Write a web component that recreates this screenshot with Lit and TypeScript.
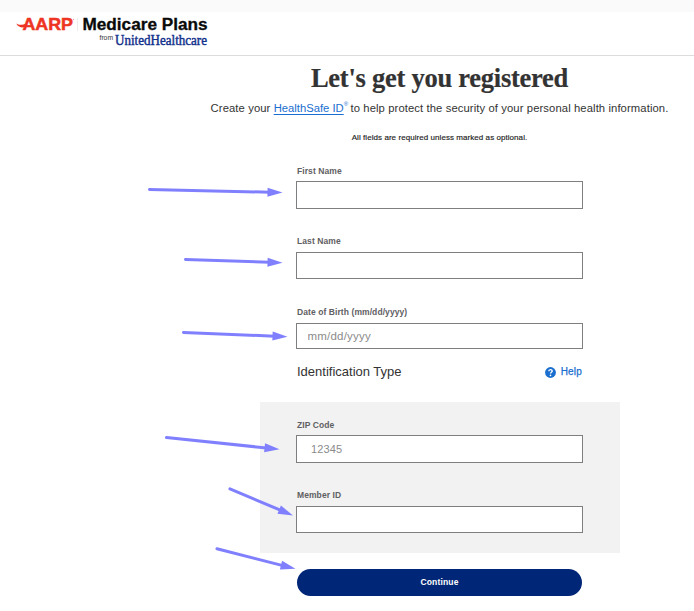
import { LitElement, html, css, svg } from "lit";
import { customElement } from "lit/decorators.js";

@customElement("brand-logo")
class BrandLogo extends LitElement {
  static styles = css`
    :host { display: block; height: 43px; }
    svg { display: block; }
    .aarp { font: bold 16.5px "Liberation Sans", Arial, sans-serif; fill: #ee3524; stroke: #ee3524; stroke-width: 0.5; }
    .plans { font: bold 16px "Liberation Sans", Arial, sans-serif; fill: #0a0a0a; stroke: #0a0a0a; stroke-width: 0.3; }
    .from { font: 7.5px "Liberation Sans", Arial, sans-serif; fill: #333; }
    .uhc { font: 14px "Liberation Serif", "Times New Roman", serif; fill: #12318c; stroke: #12318c; stroke-width: 0.45; }
  `;
  render() {
    return html`<svg width="230" height="43" viewBox="0 12 230 43">
      <path d="M16.3 23.6C19 25.4 22 25.1 27 23.4L25.5 26.5C21.5 28.4 18 27.2 16.3 23.6Z" fill="#ee3524" />
      <text class="aarp" x="22.5" y="30" textLength="50.5" lengthAdjust="spacingAndGlyphs">AARP</text>
      <circle cx="73.5" cy="19.5" r="0.7" fill="#f6a59b" />
      <path d="M77.5 18V31" stroke="#ececec" />
      <text class="plans" x="82.5" y="30" textLength="125" lengthAdjust="spacingAndGlyphs">Medicare Plans</text>
      <text class="from" x="99.5" y="40" textLength="13.5" lengthAdjust="spacingAndGlyphs">from</text>
      <text class="uhc" x="115" y="45" textLength="92" lengthAdjust="spacingAndGlyphs">UnitedHealthcare</text>
    </svg>`;
  }
}

@customElement("form-field")
class FormField extends LitElement {
  static properties = { label: {}, placeholder: {} };
  declare label: string;
  declare placeholder: string;
  static styles = css`
    :host { display: block; font-family: "Liberation Sans", Arial, sans-serif; }
    label { display: block; box-sizing: border-box; height: var(--label-height, 16px); padding-left: 1px; font: bold 8.5px/12px "Liberation Sans", Arial, sans-serif; color: #5f6063; letter-spacing: 0.08px; }
    input { display: block; box-sizing: border-box; width: 287px; height: var(--field-height, 27px); margin: 0; border: 1px solid #7d7f81; border-radius: 0; background: #fff; padding: 0 0 0 var(--field-indent, 11px); font: var(--hint-size, 11px) "Liberation Sans", Arial, sans-serif; letter-spacing: var(--hint-spacing, 0); outline: none; color: #333; }
    input::placeholder { color: #8b8b8b; opacity: 1; }
  `;
  render() {
    return html`<label for="field">${this.label}</label><input id="field" placeholder=${this.placeholder ?? ""} />`;
  }
}

const arrows = [
  [148.5, 189.5, 282.5, 192.5],
  [184.5, 259.5, 282.5, 262.7],
  [182.5, 332.5, 287.5, 336.7],
  [165.5, 437.5, 279.5, 449.3],
  [229, 488.5, 293, 515.5],
  [216, 548.5, 295.5, 568.8],
];

@customElement("app-root")
class AppRoot extends LitElement {
  static styles = css`
    :host { display: block; position: relative; width: 694px; height: 611px; overflow: hidden; background: #fff; font-family: "Liberation Sans", Arial, sans-serif; color: #333; }
    .strip { height: 12px; background: #fafafa; }
    header { border-bottom: 1px solid #dcdcdc; }
    main { display: flex; flex-direction: column; width: 480px; margin-left: 199.5px; align-items: center; }
    h1 { margin: 6px 0 0; height: 32px; font: bold 26.5px/32px "Liberation Serif", "Times New Roman", serif; letter-spacing: -0.25px; white-space: nowrap; color: #333; -webkit-text-stroke: 0.2px #333; }
    .intro { margin: 6px 0 0; height: 16px; font-size: 11.25px; line-height: 16px; white-space: nowrap; letter-spacing: 0.1px; }
    a { color: #196ecf; text-decoration: underline; text-underline-offset: 2px; letter-spacing: 0; }
    sup { margin-right: -1px; font-size: 6px; line-height: 0; vertical-align: 6px; color: #196ecf; }
    .note { margin: 16px 0 0; height: 12px; font-size: 8px; line-height: 12px; white-space: nowrap; letter-spacing: 0.06px; color: #222; -webkit-text-stroke: 0.15px #222; }
    form { display: flex; flex-direction: column; align-items: center; width: 360px; margin-top: 21px; }
    .last { margin-top: 26px; --label-height: 17px; }
    .birth { margin-top: 27px; --label-height: 17px; --field-height: 26px; --field-indent: 10.5px; --hint-size: 11.5px; --hint-spacing: 0.2px; }
    .tall { --field-height: 28px; }
    .zip { --field-indent: 14px; --hint-spacing: 0.15px; }
    .member { margin-top: 26px; --label-height: 17px; }
    .type { display: flex; justify-content: space-between; width: 285px; height: 20px; margin-top: 13px; line-height: 20px; font-size: 13px; }
    .help { display: flex; align-items: center; gap: 5px; font-size: 10px; color: #196ecf; -webkit-text-stroke: 0.25px #196ecf; letter-spacing: 0.2px; }
    .help svg { margin-top: 1px; -webkit-text-stroke: 0; }
    .panel { display: flex; flex-direction: column; align-items: center; box-sizing: border-box; width: 360px; height: 151px; margin-top: 20px; padding-top: 17px; background: #f2f2f2; }
    button { width: 285px; height: 27px; margin-top: 16px; border: 0; border-radius: 14px; padding: 0 0 2px; background: #002677; color: #fff; font: bold 8.5px "Liberation Sans", Arial, sans-serif; letter-spacing: 0.15px; }
    .arrows { position: absolute; inset: 0; pointer-events: none; }
  `;
  arrow([x1, y1, x2, y2]: number[]) {
    const angle = (Math.atan2(y2 - y1, x2 - x1) * 180) / Math.PI;
    const length = Math.hypot(x2 - x1, y2 - y1);
    return svg`<g transform="translate(${x1} ${y1}) rotate(${angle})">
      <path d="M1 0H${length - 13}" stroke="#8080ff" stroke-width="3" stroke-linecap="round" />
      <path d=${`M${length} 0L${length - 15} -4.5V4.5Z`} fill="#8080ff" />
    </g>`;
  }
  render() {
    return html`
      <div class="strip"></div>
      <header><brand-logo></brand-logo></header>
      <main>
        <h1>Let's get you registered</h1>
        <p class="intro">Create your <a>HealthSafe ID</a><sup>®</sup> to help protect the security of your personal health information.</p>
        <p class="note">All fields are required unless marked as optional.</p>
        <form>
          <form-field class="tall" label="First Name"></form-field>
          <form-field class="last" label="Last Name"></form-field>
          <form-field class="birth" label="Date of Birth (mm/dd/yyyy)" placeholder="mm/dd/yyyy"></form-field>
          <div class="type">
            <span>Identification Type</span>
            <span class="help">
              <svg width="11" height="11" viewBox="0 0 11 11"><circle cx="5.5" cy="5.5" r="5.4" fill="#196ecf" /><path d="M3.8 4.3C3.8 2.1 7.2 2.1 7.2 4.1C7.2 5.3 5.5 5.2 5.5 6.6" fill="none" stroke="#fff" stroke-width="1.4" /><circle cx="5.5" cy="8.3" r="0.85" fill="#fff" /></svg>
              Help
            </span>
          </div>
          <div class="panel">
            <form-field class="zip tall" label="ZIP Code" placeholder="12345"></form-field>
            <form-field class="member" label="Member ID"></form-field>
          </div>
          <button type="button">Continue</button>
        </form>
      </main>
      <svg class="arrows" width="694" height="611">${arrows.map((a) => this.arrow(a))}</svg>
    `;
  }
}
